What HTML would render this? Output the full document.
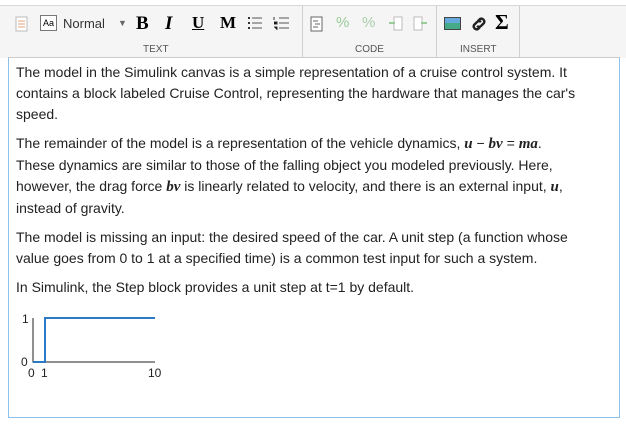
<!DOCTYPE html>
<html><head><meta charset="utf-8"><style>
body{margin:0;width:626px;height:427px;background:#fff;font-family:"Liberation Sans",sans-serif;position:relative;overflow:hidden}
.tb{position:absolute;left:0;top:5px;width:626px;height:52px;background:#f5f5f5;border-top:1px solid #d8d8d8}
.lbl{position:absolute;top:38px;font-size:10px;color:#555}
.sep{position:absolute;top:0;width:1px;height:52px;background:#d0d0d0}
.i{position:absolute;top:8px;font-size:16px}
.box{position:absolute;left:8px;top:57px;width:610px;height:359px;border:1.5px solid #8ec0ea;border-top:1px solid #ccc}
.t{position:absolute;left:16px;font-size:14px;color:#222;line-height:21px;width:562px}
.m{font-family:"Liberation Serif",serif;font-style:italic;font-weight:bold;font-size:15px}
</style></head><body>
<div class="tb">
<div class="sep" style="left:302px"></div><div class="sep" style="left:436px"></div><div class="sep" style="left:519px"></div>
<svg style="position:absolute;left:15px;top:10px" width="14" height="16"><rect x="1" y="1" width="11" height="14" fill="#fff" stroke="#bbb"/><path d="M3 5h7M3 8h7M3 11h7" stroke="#e8a080"/></svg>
<div style="position:absolute;left:40px;top:9px;width:15px;height:14px;border:1px solid #777;background:#fff;font-size:9px;line-height:14px;text-align:center">Aa</div>
<div style="position:absolute;left:63px;top:10px;font-size:13px;color:#333">Normal</div>
<div style="position:absolute;left:118px;top:12px;font-size:9px;color:#666">▼</div>
<div class="i" style="left:136px;top:7px;font-family:'Liberation Serif';font-weight:bold;font-size:19px">B</div>
<div class="i" style="left:165px;top:7px;font-family:'Liberation Serif';font-weight:bold;font-style:italic;font-size:19px">I</div>
<div class="i" style="left:192px;top:7px;font-family:'Liberation Serif';font-weight:bold;text-decoration:underline;font-size:17px">U</div>
<div class="i" style="left:220px;top:7px;font-family:'Liberation Serif';font-weight:bold;font-size:17px">M</div>
<svg style="position:absolute;left:247px;top:10px" width="16" height="14"><path d="M5 2h10M5 7h10M5 12h10" stroke="#555"/><path d="M1 2h2M1 7h2M1 12h2" stroke="#333" stroke-width="2"/></svg>
<svg style="position:absolute;left:273px;top:10px" width="16" height="14"><path d="M6 2h10M6 7h10M6 12h10" stroke="#555"/><path d="M1 1v3M1 6h3v2h-3M1 11h3v3" stroke="#333"/></svg>
<svg style="position:absolute;left:310px;top:10px" width="13" height="16"><rect x="1" y="1" width="11" height="14" fill="#fff" stroke="#666"/><path d="M3 5h5M5 8h5M3 11h5" stroke="#666"/></svg>
<div class="i" style="left:336px;top:8px;color:#9c9;font-size:15px">%</div>
<div class="i" style="left:362px;top:8px;color:#aca;font-size:15px">%</div>
<svg style="position:absolute;left:388px;top:10px" width="15" height="15"><rect x="6" y="1" width="8" height="13" fill="#fff" stroke="#bbb"/><path d="M1 7h6" stroke="#9c9" stroke-width="2"/></svg>
<svg style="position:absolute;left:413px;top:10px" width="15" height="15"><rect x="1" y="1" width="8" height="13" fill="#fff" stroke="#bbb"/><path d="M8 7h6" stroke="#9c9" stroke-width="2"/></svg>
<svg style="position:absolute;left:444px;top:11px" width="17" height="13"><rect x="0.5" y="0.5" width="16" height="12" fill="#4a8" stroke="#444"/><rect x="1" y="1" width="15" height="5" fill="#6ad"/></svg>
<svg style="position:absolute;left:470px;top:9px" width="18" height="18"><g fill="none" stroke="#222" stroke-width="2.4"><path d="M8 6l2-2a3 3 0 0 1 4 4l-3 3a3 3 0 0 1-4 0"/><path d="M10 12l-2 2a3 3 0 0 1-4-4l3-3a3 3 0 0 1 4 0"/></g></svg>
<div class="i" style="left:495px;top:4px;font-size:21px;font-weight:bold;font-family:'Liberation Serif'">Σ</div>
<div class="lbl" style="left:143px">TEXT</div>
<div class="lbl" style="left:355px">CODE</div>
<div class="lbl" style="left:460px">INSERT</div>
</div>
<div class="box"></div>
<div class="t" style="top:62px">The model in the Simulink canvas is a simple representation of a cruise control system. It contains a block labeled Cruise Control, representing the hardware that manages the car's speed.</div>
<div class="t" style="top:133px">The remainder of the model is a representation of the vehicle dynamics, <span class="m">u</span> − <span class="m">bv</span> = <span class="m">ma</span>.<br>These dynamics are similar to those of the falling object you modeled previously. Here,<br>however, the drag force <span class="m">bv</span> is linearly related to velocity, and there is an external input, <span class="m">u</span>,<br>instead of gravity.</div>
<div class="t" style="top:227px">The model is missing an input: the desired speed of the car. A unit step (a function whose<br>value goes from 0 to 1 at a specified time) is a common test input for such a system.</div>
<div class="t" style="top:277px">In Simulink, the Step block provides a unit step at t=1 by default.</div>
<svg style="position:absolute;left:0;top:300px" width="200" height="90">
<path d="M33 18v44h122" stroke="#222" fill="none"/>
<path d="M33 62h12V18h110" stroke="#2a7ac8" stroke-width="2" fill="none"/>
<g font-family="Liberation Sans" font-size="12" fill="#222"><text x="22" y="23">1</text><text x="21" y="66">0</text><text x="28" y="77">0</text><text x="41" y="77">1</text><text x="148" y="77">10</text></g>
</svg>
</body></html>
